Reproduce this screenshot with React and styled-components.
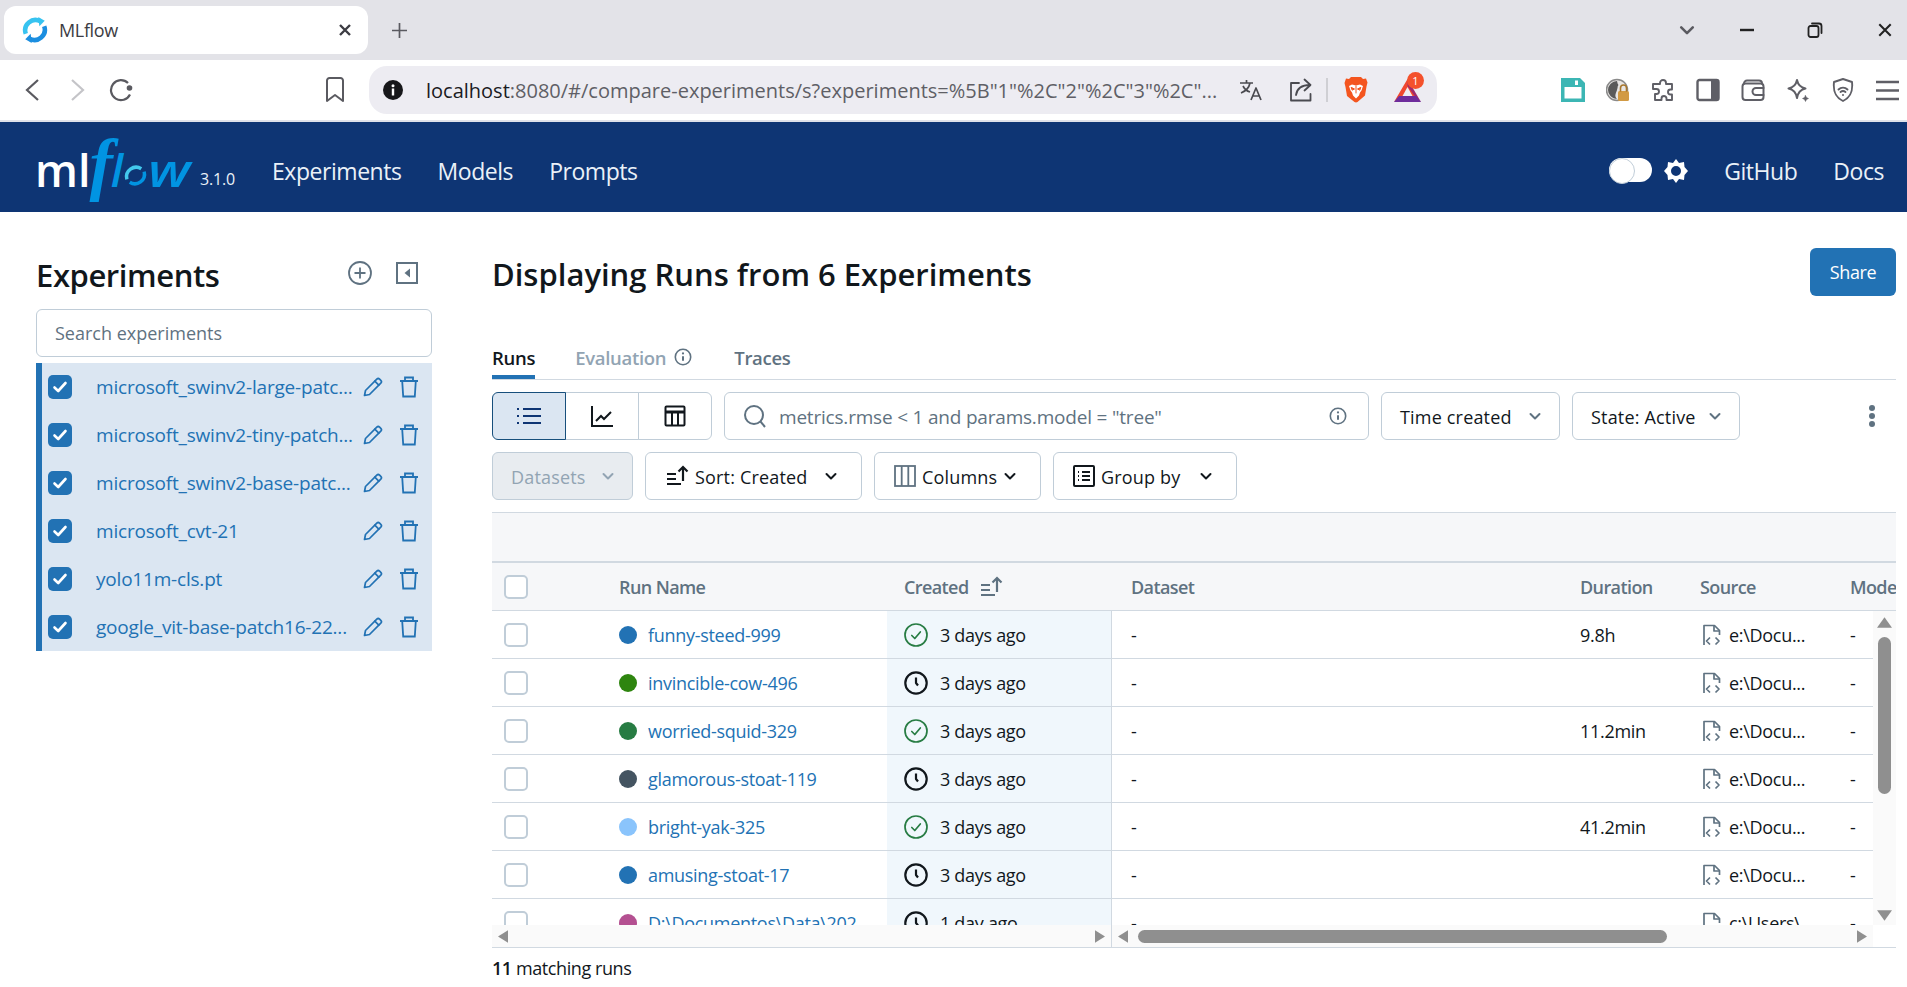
import React from 'react'
import styled, { createGlobalStyle } from 'styled-components'

const FONT = '"Open Sans", "Noto Sans", sans-serif'
const BLUE = '#2272b4'
const BORDER = '#d1d9e1'
const CONTROL = '#c0cdd8'
const GRAY = '#5f7281'
const INK = '#11171c'

const Global = createGlobalStyle`
  html, body { margin: 0; padding: 0; background: #fff; }
  body { width: 1907px; height: 987px; overflow: hidden; font-family: ${FONT}; color: ${INK}; font-size: 18px; }
  * { box-sizing: border-box; }
`

const Svg = styled.svg.attrs(p => ({
  viewBox: p.$box || '0 0 24 24',
  width: p.$size || 24,
  height: p.$h || p.$size || 24,
  fill: 'none',
  stroke: p.$color || 'currentColor',
  strokeWidth: p.$sw ?? 2,
  strokeLinecap: 'round',
  strokeLinejoin: 'round',
}))`
  flex: none;
  display: block;
`

const Frame = styled.div`
  width: 1907px;
  height: 987px;
  overflow: hidden;
  display: flex;
  flex-direction: column;
`

/* browser chrome */
const TabStrip = styled.div`
  height: 60px;
  background: #e3e3e8;
  display: flex;
  align-items: center;
  padding: 0 13px 0 4px;
  flex: none;
`
const Tab = styled.div`
  width: 364px;
  height: 48px;
  background: #fff;
  border-radius: 12px;
  display: flex;
  align-items: center;
  padding: 0 16px 0 18px;
  font-size: 18px;
  color: #3c3c43;
`
const TabTitle = styled.span`
  margin-left: 11px;
  flex: 1;
  letter-spacing: -0.35px;
`
const NewTab = styled.div`
  margin-left: 22px;
  color: #5a5a60;
  display: flex;
`
const WindowBtns = styled.div`
  margin-left: auto;
  display: flex;
  align-items: center;
  color: #222;
`
const WinBtn = styled.div`
  width: 18px;
  margin-left: ${p => p.$ml || 0}px;
  display: flex;
  justify-content: center;
`
const Toolbar = styled.div`
  height: 62px;
  flex: none;
  background: #fff;
  border-bottom: 2px solid #dfe2ea;
  display: flex;
  align-items: flex-start;
  padding-top: 6px;
`
const NavGroup = styled.div`
  width: 369px;
  height: 48px;
  flex: none;
  display: flex;
  align-items: center;
  padding: 0 12px 0 11px;
`
const NavBtn = styled.div`
  width: 44px;
  display: flex;
  justify-content: center;
  color: ${p => p.$color || '#5a5a60'};
  margin-left: ${p => (p.$push ? 'auto' : 0)};
`
const Address = styled.div`
  width: 1068px;
  height: 48px;
  flex: none;
  background: #edecf2;
  border-radius: 18px;
  display: flex;
  align-items: center;
  padding: 0 16px 0 14px;
  position: relative;
`
const Url = styled.div`
  margin-left: 23px;
  width: 800px;
  font-size: 20px;
  color: #5f5f66;
  letter-spacing: 0;
  white-space: nowrap;
  overflow: hidden;
  b { font-weight: 400; color: #1b1b1f; }
`
const AddressIcons = styled.div`
  margin-left: 16px;
  display: flex;
  align-items: center;
  color: #4a4a50;
`
const ShareIcon = styled.div`
  margin-left: 26px;
`
const Divider = styled.div`
  width: 2px;
  height: 24px;
  background: #cfcfd4;
  margin: 0 16px 0 13px;
`
const Badge = styled.span`
  position: absolute;
  right: -3px;
  top: -7px;
  width: 17px;
  height: 17px;
  border-radius: 50%;
  background: #f4512c;
  color: #fff;
  font-size: 11px;
  line-height: 17px;
  text-align: center;
`
const BatWrap = styled.div`
  position: relative;
  margin-left: 26px;
  width: 27px;
`
const ExtGroup = styled.div`
  margin-left: 113px;
  display: flex;
  height: 48px;
  align-items: center;
  color: #5f5f66;
`
const ExtBtn = styled.div`
  width: 45px;
  flex: none;
  display: flex;
  justify-content: center;
`

/* app header */
const Header = styled.header`
  height: 90px;
  flex: none;
  background: #0e3574;
  display: flex;
  align-items: center;
  color: #eaf1f8;
  padding: 0 23px 0 35px;
`
const Logo = styled.div`
  width: 165px;
  height: 60px;
  display: flex;
  align-items: baseline;
  font-weight: 600;
  font-size: 45px;
  line-height: 60px;
  color: #fff;
  overflow: visible;
  transform: translateY(-3px);
`
const LogoF = styled.span`
  font-family: "Liberation Serif", serif;
  font-style: italic;
  font-weight: 700;
  font-size: 70px;
  color: #0194e2;
  margin-left: -1px;
`
const LogoLow = styled.span`
  font-style: italic;
  font-weight: 600;
  font-size: 45px;
  color: #0194e2;
  display: inline-flex;
  align-items: baseline;
  margin-left: -2px;
`
const LogoO = styled.span`
  display: inline-block;
  width: 25px;
  height: 26px;
  transform: translateY(2px);
`
const LogoW = styled.span`
  display: inline-block;
  width: 40px;
  transform: scaleX(1.25);
  transform-origin: left;
`
const Version = styled.span`
  font-size: 16px;
  margin-top: 23px;
  width: 72px;
  letter-spacing: -0.2px;
`
const NavLink = styled.a`
  font-size: 23px;
  color: #eaf1f8;
  padding-top: 7px;
  margin-left: ${p => p.$ml || 0}px;
  margin-right: ${p => p.$gap ?? 36}px;
  letter-spacing: -0.45px;
`
const HeaderRight = styled.div`
  margin-left: auto;
  display: flex;
  align-items: center;
`
const Toggle = styled.div`
  width: 43px;
  height: 24px;
  margin-top: 5px;
  border-radius: 12px;
  background: #fff;
  position: relative;
  &:after {
    content: '';
    position: absolute;
    left: 0;
    top: 0;
    width: 24px;
    height: 24px;
    border-radius: 50%;
    background: #fff;
    border: 1px solid #c0cdd8;
  }
`
const Gear = styled.div`
  margin: 8px 0 0 12px;
`

/* page */
const Body = styled.div`
  flex: 1;
  display: flex;
  min-height: 0;
`
const Sidebar = styled.aside`
  width: 396px;
  margin-left: 36px;
  padding-top: 37px;
  flex: none;
`
const SideHead = styled.div`
  height: 48px;
  display: flex;
  align-items: center;
  color: ${GRAY};
`
const H1 = styled.h1`
  margin: 0;
  font-size: 31px;
  font-weight: 600;
  color: ${INK};
  letter-spacing: -0.42px;
  flex: 1;
  padding-top: 3px;
`
const SideIcon = styled.div`
  width: 24px;
  margin-right: ${p => p.$mr || 0}px;
`
const SearchBox = styled.div`
  margin-top: 12px;
  height: 48px;
  border: 1px solid ${CONTROL};
  border-radius: 6px;
  display: flex;
  align-items: center;
  padding: 0 18px;
  color: ${GRAY};
`
const ExpList = styled.div`
  margin-top: 6px;
  background: #dbe6f2;
  border-left: 6px solid ${BLUE};
`
const ExpRow = styled.div`
  height: 48px;
  display: flex;
  align-items: center;
  padding-left: 6px;
  color: ${BLUE};
`
const Check = styled.div`
  width: 24px;
  height: 24px;
  border-radius: 5px;
  flex: none;
  background: ${BLUE};
  display: flex;
  align-items: center;
  justify-content: center;
`
const ExpName = styled.div`
  margin-left: 24px;
  width: 259px;
  font-size: 19px;
  letter-spacing: -0.2px;
  white-space: nowrap;
`
const ExpIcon = styled.div`
  width: 36px;
  display: flex;
  justify-content: center;
`

const Main = styled.main`
  width: 1404px;
  margin-left: 60px;
  padding-top: 36px;
  flex: none;
`
const TitleRow = styled.div`
  height: 48px;
  display: flex;
  align-items: center;
  justify-content: space-between;
`
const H2 = styled(H1)`
  flex: none;
  letter-spacing: 0;
`
const Share = styled.button`
  width: 86px;
  height: 48px;
  border: 0;
  border-radius: 6px;
  background: ${BLUE};
  color: #fff;
  font: 18px ${FONT};
  letter-spacing: -0.4px;
`
const Tabs = styled.div`
  margin-top: 40px;
  height: 44px;
  border-bottom: 1px solid ${BORDER};
  display: flex;
  align-items: flex-end;
`
const TabItem = styled.div`
  height: 44px;
  margin-right: ${p => p.$mr || 40}px;
  display: flex;
  align-items: center;
  gap: 8px;
  padding-top: 4px;
  font-weight: 600;
  font-size: 18.5px;
  letter-spacing: -0.3px;
  color: ${p => p.$color || INK};
  border-bottom: ${p => (p.$on ? `4px solid ${BLUE}` : '4px solid transparent')};
`
const ControlRow = styled.div`
  margin-top: 12px;
  height: 48px;
  display: flex;
  gap: 12px;
  align-items: center;
`
const Segments = styled.div`
  display: flex;
  width: 220px;
  height: 48px;
`
const Segment = styled.div`
  flex: 1;
  display: flex;
  align-items: center;
  justify-content: center;
  margin-left: ${p => (p.$first ? 0 : '-1px')};
  border: 1px solid ${p => (p.$on ? '#174f7c' : CONTROL)};
  background: ${p => (p.$on ? '#dbe6f2' : '#fff')};
  position: relative;
  z-index: ${p => (p.$on ? 1 : 0)};
  border-radius: ${p => (p.$first ? '6px 0 0 6px' : p.$last ? '0 6px 6px 0' : '0')};
`
const QueryBox = styled.div`
  width: 645px;
  height: 48px;
  border: 1px solid ${CONTROL};
  border-radius: 6px;
  display: flex;
  align-items: center;
  padding: 0 21px 0 18px;
  color: ${GRAY};
`
const QueryText = styled.span`
  margin-left: 12px;
  flex: 1;
  padding-top: 1px;
  font-size: 19px;
  letter-spacing: -0.2px;
`
const Select = styled.div`
  width: ${p => p.$w}px;
  height: 48px;
  flex: none;
  border: 1px solid ${CONTROL};
  border-radius: 6px;
  display: flex;
  align-items: center;
  justify-content: space-between;
  padding: 0 ${p => p.$pr || 17}px 0 ${p => p.$pl || 18}px;
  gap: ${p => p.$gap || 6}px;
  letter-spacing: 0.18px;
  color: ${p => (p.$off ? '#92a4b3' : INK)};
  background: ${p => (p.$off ? '#e8ecf0' : '#fff')};
`
const SelectLabel = styled.span`
  flex: 1;
  padding-top: 1px;
  white-space: nowrap;
`
const Kebab = styled.div`
  margin-left: auto;
  margin-right: 19px;
  color: ${GRAY};
`

/* table */
const Table = styled.div`
  margin-top: 12px;
  border-top: 1px solid ${BORDER};
  border-bottom: 1px solid ${BORDER};
`
const Band = styled.div`
  height: 50px;
  background: #f6f7f9;
  border-bottom: 2px solid ${BORDER};
`
const Grid = styled.div`
  display: grid;
  grid-template-columns: 127px 268px 225px 468px 120px 150px 46px;
  height: 48px;
  align-items: center;
  background: ${p => (p.$head ? '#f6f7f9' : '#fff')};
  border-bottom: 1px solid ${BORDER};
  overflow: hidden;
  color: ${p => (p.$head ? GRAY : INK)};
  font-weight: ${p => (p.$head ? 600 : 400)};
  letter-spacing: ${p => (p.$head ? '-0.6px' : '-0.3px')};
`
const Cell = styled.div`
  height: 100%;
  display: flex;
  align-items: center;
  white-space: nowrap;
  gap: ${p => p.$gap || 0}px;
  padding-left: ${p => p.$pl || 0}px;
`
const CreatedCell = styled(Cell)`
  background: ${p => (p.$head ? 'transparent' : '#f0f7fc')};
  border-right: ${p => (p.$head ? 0 : `1px solid ${BORDER}`)};
  padding-left: 17px;
  gap: ${p => (p.$head ? 10 : 12)}px;
`
const EmptyBox = styled.div`
  width: 24px;
  height: 24px;
  border: 2px solid ${CONTROL};
  border-radius: 5px;
  background: #fff;
`
const Dot = styled.span`
  width: 18px;
  height: 18px;
  border-radius: 50%;
  background: ${p => p.$c};
  flex: none;
`
const RunLink = styled.a`
  color: ${BLUE};
`
const Scroller = styled.div`
  display: flex;
  height: 314px;
`
const Rows = styled.div`
  width: 1381px;
  height: 314px;
  overflow: hidden;
`
const VRail = styled.div`
  width: 23px;
  background: #fafafa;
  display: flex;
  flex-direction: column;
  align-items: center;
  padding-top: 6px;
  position: relative;
`
const VThumb = styled.div`
  width: 13px;
  height: 157px;
  border-radius: 7px;
  background: #8f8f8f;
  margin-top: 9px;
`
const ArrowDown = styled.div`
  margin-top: auto;
  margin-bottom: 4px;
`
const HRail = styled.div`
  height: 22px;
  width: 1381px;
  display: flex;
  background: #fafafa;
`
const HPart = styled.div`
  width: ${p => p.$w}px;
  height: 100%;
  display: flex;
  align-items: center;
  justify-content: space-between;
  padding: 0 6px;
  border-right: ${p => (p.$sep ? `1px solid ${BORDER}` : 0)};
`
const HThumb = styled.div`
  width: 529px;
  height: 13px;
  border-radius: 7px;
  background: #8f8f8f;
  margin-right: 180px;
`
const Footer = styled.div`
  margin-top: 8px;
  letter-spacing: -0.42px;
  b { font-weight: 600; }
`

/* icons */
const Favicon = () => (
  <Svg $size={26} $box="0 0 24 24" $sw={2}>
    <path d="M3.500 15.500A9.500 9.500 0 0 1 17 4" stroke="#37c3f0" strokeWidth="4.200" strokeLinecap="butt" />
    <path d="M20.500 8.500A9.500 9.500 0 0 1 7 20" stroke="#1b8ee0" strokeWidth="4.200" strokeLinecap="butt" />
    <path d="M15 0l6 3.500-5 5z" fill="#37c3f0" stroke="none" />
    <path d="M9 24l-6-3.500 5-5z" fill="#1b8ee0" stroke="none" />
  </Svg>
)
const Close = ({ size = 14, sw = 2.4 }) => (
  <Svg $size={size} $box="0 0 14 14" $sw={sw}><path d="M2 2l10 10M12 2L2 12" strokeLinecap="butt" /></Svg>
)
const Chevron = ({ size = 14, color, sw = 2 }) => (
  <Svg $size={size} $box="0 0 14 14" $color={color} $sw={sw}><path d="M2.500 5l4.500 4.500L11.500 5" /></Svg>
)
const Info = ({ size = 18, color = GRAY }) => (
  <Svg $size={size} $box="0 0 18 18" $color={color} $sw={1.6}>
    <circle cx="9" cy="9" r="7.700" />
    <path d="M9 8.200v4.600" strokeWidth="2" strokeLinecap="butt" />
    <circle cx="9" cy="5.400" r="1.100" fill={color} stroke="none" />
  </Svg>
)
const Pencil = () => (
  <Svg $size={20} $box="0 0 20 20" $color={BLUE} $sw={1.7}>
    <path d="M1.500 18.500l1-5L13.800 2.200a2 2 0 0 1 2.800 0l1.200 1.200a2 2 0 0 1 0 2.800L6.500 17.500z" />
    <path d="M11.800 4.200l4 4" />
  </Svg>
)
const Trash = () => (
  <Svg $size={22} $box="0 0 22 22" $color={BLUE} $sw={1.8}>
    <path d="M2 5h18M7 5V1.500h8V5M4.200 5l1 15.500h11.600l1-15.500" strokeLinecap="butt" strokeLinejoin="miter" />
  </Svg>
)
const Tick = () => (
  <Svg $size={16} $box="0 0 16 16" $color="#fff" $sw={2.6}><path d="M2.500 8.500l3.700 3.500 7.300-8" /></Svg>
)
const SortIcon = ({ color = INK }) => (
  <Svg $size={24} $box="0 0 24 24" $color={color} $sw={2.2}>
    <path d="M2 10h9M2 15h9M2 20h14" strokeLinecap="butt" />
    <path d="M18 17V3M13.500 7.500L18 3l4.500 4.500" strokeLinejoin="miter" strokeLinecap="butt" />
  </Svg>
)
const StatusOk = () => (
  <Svg $size={24} $box="0 0 24 24" $color="#277c43" $sw={1.7}>
    <circle cx="12" cy="12" r="11" />
    <path d="M7.800 12.500l3 3 5.500-6.500" />
  </Svg>
)
const StatusClock = () => (
  <Svg $size={24} $box="0 0 24 24" $color={INK} $sw={2.2}>
    <circle cx="12" cy="12" r="10.700" />
    <path d="M12 6.500v5.500l2 2.500" strokeLinecap="butt" />
  </Svg>
)
const FileCode = () => (
  <Svg $size={20} $h={22} $box="0 0 20 22" $color={GRAY} $sw={1.7}>
    <path d="M2 21V1.500h10.500L17.500 6.500V11" strokeLinecap="butt" />
    <path d="M12 1.500V7h5.500" strokeLinecap="butt" />
    <path d="M8 13.500L4.500 17 8 20.500M13.500 13.500L17 17l-3.500 3.500" strokeLinecap="butt" />
  </Svg>
)
const Tri = ({ dir, w = 13, h = 16 }) => {
  const d = { left: 'M13 0v16L0 8z', right: 'M0 0v16L13 8z', up: 'M8 0l8 11H0z', down: 'M8 11L0 0h16z' }[dir]
  const box = dir === 'left' || dir === 'right' ? '0 0 13 16' : '0 0 16 11'
  return (
    <Svg $size={w} $h={h} $box={box} $sw={0} $color="none"><path d={d} fill="#8f8f8f" /></Svg>
  )
}

const experiments = [
  'microsoft_swinv2-large-patc...',
  'microsoft_swinv2-tiny-patch...',
  'microsoft_swinv2-base-patc...',
  'microsoft_cvt-21',
  'yolo11m-cls.pt',
  'google_vit-base-patch16-22...',
]

const runs = [
  { name: 'funny-steed-999', color: '#2272b4', ok: true, created: '3 days ago', duration: '9.8h', source: 'e:\\Docu...' },
  { name: 'invincible-cow-496', color: '#2e850f', created: '3 days ago', source: 'e:\\Docu...' },
  { name: 'worried-squid-329', color: '#277c43', ok: true, created: '3 days ago', duration: '11.2min', source: 'e:\\Docu...' },
  { name: 'glamorous-stoat-119', color: '#445461', created: '3 days ago', source: 'e:\\Docu...' },
  { name: 'bright-yak-325', color: '#8ac4fc', ok: true, created: '3 days ago', duration: '41.2min', source: 'e:\\Docu...' },
  { name: 'amusing-stoat-17', color: '#2272b4', created: '3 days ago', source: 'e:\\Docu...' },
  { name: 'D:\\Documentos\\Data\\202', color: '#b45091', created: '1 day ago', source: 'c:\\Users\\' },
]

export default function App() {
  return (
    <Frame>
      <Global />
      <TabStrip>
        <Tab>
          <Favicon />
          <TabTitle>MLflow</TabTitle>
          <Close />
        </Tab>
        <NewTab>
          <Svg $size={19} $box="0 0 19 19" $sw={1.7}><path d="M9.500 2v15M2 9.500h15" strokeLinecap="butt" /></Svg>
        </NewTab>
        <WindowBtns>
          <WinBtn><Chevron size={18} color="#5a5a60" /></WinBtn>
          <WinBtn $ml={42}>
            <Svg $size={16} $box="0 0 16 16" $sw={2.4}><path d="M1 8h14" strokeLinecap="butt" /></Svg>
          </WinBtn>
          <WinBtn $ml={50}>
            <Svg $size={16} $box="0 0 16 16" $sw={1.8}>
              <rect x="1.500" y="4" width="10" height="11" rx="2" />
              <path d="M5 1.500h7a2.500 2.500 0 0 1 2.500 2.500v7" />
            </Svg>
          </WinBtn>
          <WinBtn $ml={52}><Close size={16} sw={1.8} /></WinBtn>
        </WindowBtns>
      </TabStrip>

      <Toolbar>
        <NavGroup>
          <NavBtn>
            <Svg $size={22} $box="0 0 22 22" $sw={2.2}><path d="M16 1L5 11l11 10" strokeLinecap="butt" strokeLinejoin="miter" /></Svg>
          </NavBtn>
          <NavBtn $color="#c4c4c8">
            <Svg $size={22} $box="0 0 22 22" $sw={2.2}><path d="M6 1l11 10L6 21" strokeLinecap="butt" strokeLinejoin="miter" /></Svg>
          </NavBtn>
          <NavBtn>
            <Svg $size={24} $box="0 0 24 24" $sw={2.2}>
              <path d="M21 16.500A10 10 0 1 1 19 5" strokeLinecap="butt" />
              <circle cx="20.500" cy="10" r="2.800" fill="#5a5a60" stroke="none" />
            </Svg>
          </NavBtn>
          <NavBtn $push>
            <Svg $size={20} $h={26} $box="0 0 20 26" $sw={2}>
              <path d="M2 24V3.500A2.500 2.500 0 0 1 4.500 1h11A2.500 2.500 0 0 1 18 3.500V24l-8-6z" />
            </Svg>
          </NavBtn>
        </NavGroup>
        <Address>
          <Svg $size={20} $box="0 0 20 20" $sw={0} $color="none">
            <circle cx="10" cy="10" r="10" fill="#17171a" />
            <circle cx="10" cy="5.800" r="1.500" fill="#fff" />
            <rect x="8.800" y="8.500" width="2.400" height="7" fill="#fff" />
          </Svg>
          <Url><b>localhost</b>:8080/#/compare-experiments/s?experiments=%5B"1"%2C"2"%2C"3"%2C"...</Url>
          <AddressIcons>
            <Svg $size={24} $box="0 0 24 24" $sw={1.7}>
              <path d="M1 5h13M7.500 2v3M11 5c-1 5-4 8-9 10M4 8c1.500 3 4 5 7 6" strokeLinecap="butt" />
              <path d="M12 22l5-12 5 12M13.700 18h6.600" strokeLinecap="butt" />
            </Svg>
            <ShareIcon>
              <Svg $size={24} $box="0 0 24 24" $sw={1.8}>
                <path d="M10 5H2v17.500h19.500V16" />
                <path d="M7 17c1-7 6-10 14-10M15.500 1.500L21.500 7l-6 5.500" />
              </Svg>
            </ShareIcon>
            <Divider />
            <Svg $size={24} $h={28} $box="0 0 24 28" $sw={0} $color="none">
              <path d="M7 1h10l2 2 3-.5 1.500 4-1 4-1.500 9-7.500 6.500-1.500.5-1.500-.5L3 20l-1.500-9-1-4L2 2.500 5 3z" fill="#f4551f" />
              <path d="M5 10l3-1.500 4 1 4-1 3 1.500-1.500 4.500-1.500 2-1 3-3 3-3-3-1-3-1.500-2z" fill="#fff" />
              <path d="M7.500 11.500l3 1.500-2 1zM16.500 11.500l-3 1.500 2 1zM12 10v7" fill="#f4551f" stroke="#f4551f" strokeWidth="1" />
            </Svg>
            <BatWrap>
              <Svg $size={27} $h={23} $box="0 0 27 23" $sw={0} $color="none">
                <path d="M13.500 0L0 23l5-4h17z" fill="#f0482f" />
                <path d="M13.500 0L27 23l-5-4-8.500-12z" fill="#a02a6b" />
                <path d="M0 23h27l-5-6H5z" fill="#6e2c9c" />
                <path d="M13.500 8l5 9h-10z" fill="#edecf2" />
              </Svg>
              <Badge>1</Badge>
            </BatWrap>
          </AddressIcons>
        </Address>
        <ExtGroup>
          <ExtBtn>
            <Svg $size={24} $box="0 0 24 24" $sw={0} $color="none">
              <path d="M0 0h19l5 5v19H0z" fill="#3cb6b4" />
              <path d="M3.500 9h17v11.500h-17z" fill="#fff" />
              <path d="M14 2.500h3v4.500h-3z" fill="#fff" />
            </Svg>
          </ExtBtn>
          <ExtBtn>
            <Svg $size={24} $box="0 0 24 24" $sw={0} $color="none">
              <circle cx="11" cy="12" r="10.500" fill="#e8e6e4" stroke="#8a8a8a" strokeWidth="1.500" />
              <path d="M11 3a9 9 0 0 0 0 18c-3-3-1-6 0-9s1-6 0-9z" fill="#5a5a5a" />
              <circle cx="11" cy="7" r="1.300" fill="#5a5a5a" />
              <rect x="12" y="13" width="11" height="10" rx="1.500" fill="#d29a44" />
              <path d="M14.500 13v-3a3 3 0 0 1 6 0v3" stroke="#a8772e" strokeWidth="1.600" />
            </Svg>
          </ExtBtn>
          <ExtBtn>
            <Svg $size={24} $box="0 0 24 24" $sw={1.9}>
              <path d="M9 6a3 3 0 1 1 6 0v1h6v5.500h-1.500a2.500 2.500 0 0 0 0 5H21V23h-5.500v-1.500a2.500 2.500 0 0 0-5 0V23H4v-6h1.500a2.500 2.500 0 0 0 0-5H2V7h7z" transform="translate(0 -1)" />
            </Svg>
          </ExtBtn>
          <ExtBtn>
            <Svg $size={24} $box="0 0 24 24" $sw={2.4}>
              <rect x="1.500" y="2" width="21" height="20" rx="2" />
              <rect x="15" y="2" width="7.500" height="20" fill="currentColor" stroke="none" />
            </Svg>
          </ExtBtn>
          <ExtBtn>
            <Svg $size={24} $box="0 0 24 24" $sw={2}>
              <path d="M3 5.500A3 3 0 0 1 6 2.500h12a3 3 0 0 1 3 3" />
              <rect x="1.500" y="5.500" width="21" height="16.500" rx="3" />
              <path d="M22.500 10H15a3.500 3.500 0 0 0 0 7h7.500" />
            </Svg>
          </ExtBtn>
          <ExtBtn>
            <Svg $size={24} $box="0 0 24 24" $sw={2}>
              <path d="M11 2c1 5 3.500 7.500 8.500 8.500-5 1-7.500 3.500-8.500 9.500-1-6-3.500-8.500-8.500-9.500C7.500 9.500 10 7 11 2z" />
              <path d="M19.500 17.500l1 2 2 1-2 1-1 2-1-2-2-1 2-1z" fill="currentColor" strokeWidth="0.500" />
            </Svg>
          </ExtBtn>
          <ExtBtn>
            <Svg $size={24} $box="0 0 24 24" $sw={1.9}>
              <path d="M12 1l9 3c1 9-1 15-9 19C4 19 2 13 3 4z" />
              <path d="M7.500 11.500c2.500-2.500 6.500-2.500 9 0M9.500 14c1.500-1.200 3.500-1.200 5 0" />
              <circle cx="12" cy="17" r="1" fill="currentColor" stroke="none" />
            </Svg>
          </ExtBtn>
          <ExtBtn>
            <Svg $size={25} $box="0 0 25 24" $sw={2.4}><path d="M1 3.500h23M1 12h23M1 20.500h23" strokeLinecap="butt" /></Svg>
          </ExtBtn>
        </ExtGroup>
      </Toolbar>

      <Header>
        <Logo>
          ml
          <LogoF>f</LogoF>
          <LogoLow>
            l
            <LogoO>
              <Svg $size={25} $box="0 0 26 26" $sw={3.6} $color="#43c9ed">
                <path d="M4 17a10 10 0 0 1 15-11" strokeLinecap="butt" />
                <path d="M22 9a10 10 0 0 1-15 11" strokeLinecap="butt" stroke="#0194e2" />
              </Svg>
            </LogoO>
            <LogoW>w</LogoW>
          </LogoLow>
        </Logo>
        <Version>3.1.0</Version>
        <NavLink>Experiments</NavLink>
        <NavLink>Models</NavLink>
        <NavLink>Prompts</NavLink>
        <HeaderRight>
          <Toggle />
          <Gear>
            <Svg $size={24} $box="0 0 24 24" $sw={0} $color="none">
              <path fillRule="evenodd" d="M12 0l3 4 5-1 .5 5 3.500 4-3.500 4-.5 5-5-1-3 4-3-4-5 1-.5-5L0 12l3.500-4L4 3l5 1zm0 7a5 5 0 1 0 0 10 5 5 0 0 0 0-10z" fill="#fff" />
            </Svg>
          </Gear>
          <NavLink $ml={36}>GitHub</NavLink>
          <NavLink $gap={0}>Docs</NavLink>
        </HeaderRight>
      </Header>

      <Body>
        <Sidebar>
          <SideHead>
            <H1>Experiments</H1>
            <SideIcon $mr={24}>
              <Svg $size={24} $box="0 0 24 24" $sw={1.8}>
                <circle cx="12" cy="12" r="11" />
                <path d="M12 6.500v11M6.500 12h11" strokeLinecap="butt" />
              </Svg>
            </SideIcon>
            <SideIcon $mr={12}>
              <Svg $size={22} $box="0 0 22 22" $sw={2}>
                <rect x="1" y="1" width="20" height="20" strokeLinejoin="miter" />
                <path d="M14 6.500v9L8.500 11z" fill="currentColor" stroke="none" />
              </Svg>
            </SideIcon>
          </SideHead>
          <SearchBox>Search experiments</SearchBox>
          <ExpList>
            {experiments.map(name => (
              <ExpRow key={name}>
                <Check><Tick /></Check>
                <ExpName>{name}</ExpName>
                <ExpIcon><Pencil /></ExpIcon>
                <ExpIcon><Trash /></ExpIcon>
              </ExpRow>
            ))}
          </ExpList>
        </Sidebar>

        <Main>
          <TitleRow>
            <H2>Displaying Runs from 6 Experiments</H2>
            <Share>Share</Share>
          </TitleRow>
          <Tabs>
            <TabItem $on>Runs</TabItem>
            <TabItem $color="#92a4b3" $mr={42}>Evaluation <Info color={GRAY} /></TabItem>
            <TabItem $color={GRAY}>Traces</TabItem>
          </Tabs>
          <ControlRow>
            <Segments>
              <Segment $first $on>
                <Svg $size={26} $box="0 0 26 26" $color="#0e3574" $sw={2}>
                  <path d="M7 6h18M7 13h18M7 20h18" strokeLinecap="butt" />
                  <path d="M1 6h2M1 13h2M1 20h2" strokeLinecap="butt" />
                </Svg>
              </Segment>
              <Segment>
                <Svg $size={24} $box="0 0 24 24" $color={INK} $sw={2}>
                  <path d="M2 2v20h21" strokeLinecap="butt" strokeLinejoin="miter" />
                  <path d="M6 17l5-5 3 3 7-7" strokeLinecap="butt" strokeLinejoin="miter" />
                </Svg>
              </Segment>
              <Segment $last>
                <Svg $size={22} $box="0 0 22 22" $color={INK} $sw={2}>
                  <rect x="1.500" y="1.500" width="19" height="19" rx="1" />
                  <path d="M1.500 7h19" strokeWidth="3" strokeLinecap="butt" />
                  <path d="M8 7v13M14 7v13" strokeLinecap="butt" />
                </Svg>
              </Segment>
            </Segments>
            <QueryBox>
              <Svg $size={24} $box="0 0 24 24" $sw={2}>
                <circle cx="11" cy="11" r="9" />
                <path d="M17.500 17.500L22 23" strokeLinecap="butt" />
              </Svg>
              <QueryText>metrics.rmse &lt; 1 and params.model = "tree"</QueryText>
              <Info />
            </QueryBox>
            <Select $w={179}>
              <SelectLabel>Time created</SelectLabel>
              <Chevron color={GRAY} />
            </Select>
            <Select $w={168}>
              <SelectLabel>State: Active</SelectLabel>
              <Chevron color={GRAY} />
            </Select>
            <Kebab>
              <Svg $size={10} $h={24} $box="0 0 10 24" $sw={0} $color="none">
                <circle cx="5" cy="4" r="3" fill={GRAY} />
                <circle cx="5" cy="12" r="3" fill={GRAY} />
                <circle cx="5" cy="20" r="3" fill={GRAY} />
              </Svg>
            </Kebab>
          </ControlRow>
          <ControlRow>
            <Select $w={141} $off>
              <SelectLabel>Datasets</SelectLabel>
              <Chevron color="#92a4b3" />
            </Select>
            <Select $w={217} $pl={19} $pr={23}>
              <SortIcon />
              <SelectLabel>Sort: Created</SelectLabel>
              <Chevron color={INK} />
            </Select>
            <Select $w={167} $pl={19} $pr={23}>
              <Svg $size={22} $box="0 0 22 22" $color={GRAY} $sw={1.8}>
                <rect x="1" y="1" width="20" height="20" strokeLinejoin="miter" />
                <path d="M7.700 1v20M14.300 1v20" strokeLinecap="butt" />
              </Svg>
              <SelectLabel>Columns</SelectLabel>
              <Chevron color={INK} />
            </Select>
            <Select $w={184} $pl={19} $pr={23}>
              <Svg $size={22} $box="0 0 22 22" $color={INK} $sw={2}>
                <rect x="1" y="1" width="20" height="20" rx="1" />
                <path d="M9 7h8M9 11h8M9 15h8M5 7h1M5 11h1M5 15h1" strokeLinecap="butt" />
              </Svg>
              <SelectLabel>Group by</SelectLabel>
              <Chevron color={INK} />
            </Select>
          </ControlRow>

          <Table>
            <Band />
            <Grid $head>
              <Cell $pl={12}><EmptyBox /></Cell>
              <Cell>Run Name</Cell>
              <CreatedCell $head>Created <SortIcon color={GRAY} /></CreatedCell>
              <Cell $pl={19}>Dataset</Cell>
              <Cell>Duration</Cell>
              <Cell>Source</Cell>
              <Cell>Models</Cell>
            </Grid>
            <Scroller>
              <Rows>
                {runs.map(run => (
                  <Grid key={run.name}>
                    <Cell $pl={12}><EmptyBox /></Cell>
                    <Cell $gap={11}>
                      <Dot $c={run.color} />
                      <RunLink>{run.name}</RunLink>
                    </Cell>
                    <CreatedCell>
                      {run.ok ? <StatusOk /> : <StatusClock />}
                      {run.created}
                    </CreatedCell>
                    <Cell $pl={19}>-</Cell>
                    <Cell>{run.duration}</Cell>
                    <Cell $gap={7} $pl={2}>
                      <FileCode />
                      {run.source}
                    </Cell>
                    <Cell>-</Cell>
                  </Grid>
                ))}
              </Rows>
              <VRail>
                <Tri dir="up" w={15} h={11} />
                <VThumb />
                <ArrowDown><Tri dir="down" w={15} h={11} /></ArrowDown>
              </VRail>
            </Scroller>
            <HRail>
              <HPart $w={620} $sep>
                <Tri dir="left" w={10} h={13} />
                <Tri dir="right" w={10} h={13} />
              </HPart>
              <HPart $w={761}>
                <Tri dir="left" w={10} h={13} />
                <HThumb />
                <Tri dir="right" w={10} h={13} />
              </HPart>
            </HRail>
          </Table>
          <Footer><b>11</b> matching runs</Footer>
        </Main>
      </Body>
    </Frame>
  )
}
